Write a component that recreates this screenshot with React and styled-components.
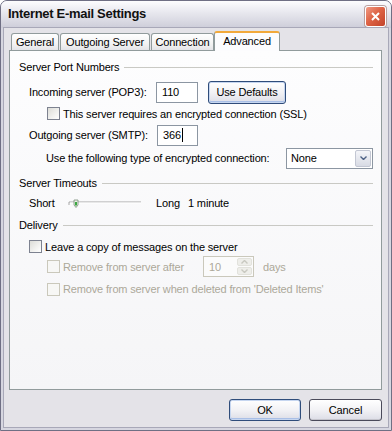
import React from "react";
import styled, { createGlobalStyle, css } from "styled-components";

const GlobalStyle = createGlobalStyle`
  html, body {
    margin: 0;
    padding: 0;
    background: #ffffff;
  }
  body {
    font-family: "Liberation Sans", Tahoma, Arial, sans-serif;
    font-size: 11px;
    letter-spacing: -0.15px;
    color: #000;
  }
`;

const Window = styled.div`
  width: 392px;
  height: 431px;
  box-sizing: border-box;
  display: flex;
  flex-direction: column;
  border: 1px solid #6f6f84;
  border-radius: 7px 7px 0 0;
  overflow: hidden;
  background: #d6d6e0;
`;

const TitleBar = styled.div`
  height: 27px;
  flex: none;
  display: flex;
  align-items: center;
  justify-content: space-between;
  padding: 0 5px 0 7px;
  background: linear-gradient(#fdfdfe 0%, #f0f0f5 25%, #e0e0e8 60%, #cdcdd9 100%);
`;

const Title = styled.span`
  font-weight: bold;
  font-size: 13px;
  letter-spacing: -0.3px;
  color: #111;
  margin-top: -2px;
`;

const CloseButton = styled.div`
  width: 21px;
  height: 21px;
  box-sizing: border-box;
  margin-top: 4px;
  border: 1px solid #fff;
  border-radius: 3px;
  background: linear-gradient(135deg, #f09a84 0%, #de6446 45%, #c2432a 100%);
  display: flex;
  align-items: center;
  justify-content: center;
  box-shadow: 0 0 0 1px #b8a0a0;
`;

const Body = styled.div`
  flex: 1;
  display: flex;
  flex-direction: column;
  padding: 0 6px 0 5px;
  margin: 0 3px 3px;
  background: #e4e3e8;
  box-shadow: 0 0 0 1px #a8a8b8;
`;

const TabStrip = styled.div`
  display: flex;
  align-items: flex-end;
  height: 19px;
  margin-top: 3px;
  padding-left: 2px;
`;

const Tab = styled.div`
  width: ${(p) => p.$w}px;
  height: 17px;
  box-sizing: border-box;
  display: flex;
  align-items: center;
  justify-content: center;
  border: 1px solid #919b9c;
  border-bottom: none;
  border-radius: 3px 3px 0 0;
  background: linear-gradient(#ffffff, #f3f3f3 60%, #e4e4e8);
  margin-right: 1px;
  ${(p) =>
    p.$active &&
    css`
      height: 20px;
      margin: 0 0 -1px -1px;
      position: relative;
      z-index: 1;
      background: #fcfcfe;
      border-top: 2px solid #f2a93b;
      padding-bottom: 2px;
    `}
`;

const Panel = styled.div`
  flex: 1;
  display: flex;
  flex-direction: column;
  border: 1px solid #919b9c;
  background: linear-gradient(#fdfdfe, #f5f5f7);
  padding: 0 8px 0 9px;
`;

const Row = styled.div`
  display: flex;
  align-items: center;
  flex: none;
  height: ${(p) => p.$h}px;
  margin-top: ${(p) => p.$mt}px;
  padding-left: ${(p) => p.$indent || 0}px;
  color: ${(p) => (p.$disabled ? "#aca899" : "#000")};
  white-space: nowrap;
`;

const Rule = styled.div`
  flex: 1;
  height: 1px;
  margin-left: 5px;
  background: #c9c9c4;
`;

const Label = styled.span`
  display: inline-block;
  width: ${(p) => (p.$w ? `${p.$w}px` : "auto")};
  margin-left: ${(p) => p.$ml || 0}px;
  flex: none;
`;

const TextBox = styled.div`
  width: ${(p) => p.$w}px;
  height: 21px;
  box-sizing: border-box;
  display: flex;
  align-items: center;
  padding-left: 5px;
  border: 1px solid #8c96a2;
  background: #fff;
  flex: none;
`;

const Caret = styled.span`
  width: 1px;
  height: 14px;
  background: #000;
  margin-left: 1px;
`;

const Button = styled.div`
  width: ${(p) => p.$w}px;
  height: ${(p) => p.$h}px;
  box-sizing: border-box;
  display: flex;
  align-items: center;
  justify-content: center;
  border: 1px solid ${(p) => (p.$default ? "#2f4c7a" : "#4a4a5a")};
  border-radius: 3px;
  background: linear-gradient(#ffffff 0%, #f2f2f5 50%, #dcdde6 100%);
  box-shadow: ${(p) =>
    p.$default
      ? "inset 0 0 0 1px #c6d6f0, inset 0 -1px 0 1px #a9bfe6"
      : "inset 0 -1px 0 #c4c4cc"};
  flex: none;
  margin-left: ${(p) => p.$ml || 0}px;
`;

const Check = styled.div`
  width: 13px;
  height: 13px;
  box-sizing: border-box;
  flex: none;
  margin-right: 3px;
  border: 1px solid ${(p) => (p.$disabled ? "#cac8bb" : "#7d8290")};
  background: ${(p) =>
    p.$disabled
      ? "#f7f7f5"
      : "linear-gradient(135deg, #dcdcd7 0%, #f2f2f0 60%, #ffffff 100%)"};
`;

const Select = styled.div`
  width: 87px;
  height: 21px;
  box-sizing: border-box;
  display: flex;
  align-items: center;
  justify-content: space-between;
  padding: 1px 1px 1px 4px;
  border: 1px solid #8c96a2;
  background: #fff;
  flex: none;
`;

const DropButton = styled.div`
  width: 16px;
  height: 17px;
  box-sizing: border-box;
  display: flex;
  align-items: center;
  justify-content: center;
  border: 1px solid #c3c7d3;
  border-radius: 2px;
  background: linear-gradient(#f4f5f9, #d8dbe4);
`;

const Spin = styled.div`
  width: 51px;
  height: 21px;
  box-sizing: border-box;
  display: flex;
  align-items: center;
  justify-content: space-between;
  padding: 1px 1px 1px 5px;
  border: 1px solid #cac8bb;
  background: #fbfbfb;
  color: #aca899;
  flex: none;
  margin-right: 9px;
`;

const SpinButtons = styled.div`
  width: 15px;
  height: 17px;
  display: flex;
  flex-direction: column;
  gap: 1px;
`;

const SpinHalf = styled.div`
  flex: 1;
  display: flex;
  align-items: center;
  justify-content: center;
  border-radius: 2px;
  background: #eeeeea;
  border: 1px solid #e2e2dc;
`;

const Footer = styled.div`
  display: flex;
  justify-content: flex-end;
  gap: 8px;
  padding: 9px 0 6px;
`;

const GroupHeading = ({ children, mt }) => (
  <Row $h={14} $mt={mt}>
    {children}
    <Rule />
  </Row>
);

const Chevron = ({ up, color }) => (
  <svg width="7" height="4" viewBox="0 0 7 4">
    <path
      d={up ? "M0.5 3.5 L3.5 0.5 L6.5 3.5" : "M0.5 0.5 L3.5 3.5 L6.5 0.5"}
      fill="none"
      stroke={color}
      strokeWidth="1.4"
    />
  </svg>
);

const Slider = () => (
  <svg width="80" height="16" viewBox="0 0 80 16" style={{ flex: "none" }}>
    <path d="M3 10 L3 7 L75 7" fill="none" stroke="#a7a7a7" strokeWidth="1" />
    <path d="M4 8 L75 8" stroke="#ffffff" strokeWidth="1" />
    <path d="M8 5 L12 5 L12 10 L10 12.5 L8 10 Z" fill="#e8f2e4" stroke="#7a8a7a" strokeWidth="0.8" />
    <path d="M9 7 L11 7 L11 10 L10 11 L9 10 Z" fill="#3aa640" />
  </svg>
);

const tabs = [
  { label: "General", w: 48 },
  { label: "Outgoing Server", w: 90 },
  { label: "Connection", w: 63 },
  { label: "Advanced", w: 66, active: true },
];

const App = () => (
  <>
    <GlobalStyle />
    <Window>
      <TitleBar>
        <Title>Internet E-mail Settings</Title>
        <CloseButton>
          <svg width="9" height="9" viewBox="0 0 9 9">
            <path d="M1 1 L8 8 M8 1 L1 8" stroke="#fff" strokeWidth="2" />
          </svg>
        </CloseButton>
      </TitleBar>
      <Body>
        <TabStrip>
          {tabs.map((t) => (
            <Tab key={t.label} $w={t.w} $active={t.active}>
              {t.label}
            </Tab>
          ))}
        </TabStrip>
        <Panel>
          <GroupHeading mt={9}>Server Port Numbers</GroupHeading>
          <Row $h={24} $mt={6} $indent={10}>
            <Label $w={127}>Incoming server (POP3):</Label>
            <TextBox $w={42}>110</TextBox>
            <Button $w={78} $h={23} $ml={10} $default>
              Use Defaults
            </Button>
          </Row>
          <Row $h={17} $mt={1} $indent={28}>
            <Check />
            This server requires an encrypted connection (SSL)
          </Row>
          <Row $h={22} $mt={2} $indent={10}>
            <Label $w={128}>Outgoing server (SMTP):</Label>
            <TextBox $w={41}>
              366
              <Caret />
            </TextBox>
          </Row>
          <Row $h={22} $mt={1} $indent={27}>
            <Label $w={240}>Use the following type of encrypted connection:</Label>
            <Select>
              None
              <DropButton>
                <Chevron color="#4d6185" />
              </DropButton>
            </Select>
          </Row>
          <GroupHeading mt={7}>Server Timeouts</GroupHeading>
          <Row $h={16} $mt={5} $indent={10}>
            <Label $w={37}>Short</Label>
            <Slider />
            <Label $w={32} $ml={10}>
              Long
            </Label>
            1 minute
          </Row>
          <GroupHeading mt={7}>Delivery</GroupHeading>
          <Row $h={15} $mt={7} $indent={10}>
            <Check />
            Leave a copy of messages on the server
          </Row>
          <Row $h={21} $mt={2} $indent={28} $disabled>
            <Check $disabled />
            <Label $w={140}>Remove from server after</Label>
            <Spin>
              10
              <SpinButtons>
                <SpinHalf>
                  <Chevron up color="#c8c8c0" />
                </SpinHalf>
                <SpinHalf>
                  <Chevron color="#c8c8c0" />
                </SpinHalf>
              </SpinButtons>
            </Spin>
            days
          </Row>
          <Row $h={16} $mt={4} $indent={28} $disabled>
            <Check $disabled />
            Remove from server when deleted from 'Deleted Items'
          </Row>
        </Panel>
        <Footer>
          <Button $w={72} $h={22} $default>
            OK
          </Button>
          <Button $w={73} $h={22}>
            Cancel
          </Button>
        </Footer>
      </Body>
    </Window>
  </>
);

export default App;
